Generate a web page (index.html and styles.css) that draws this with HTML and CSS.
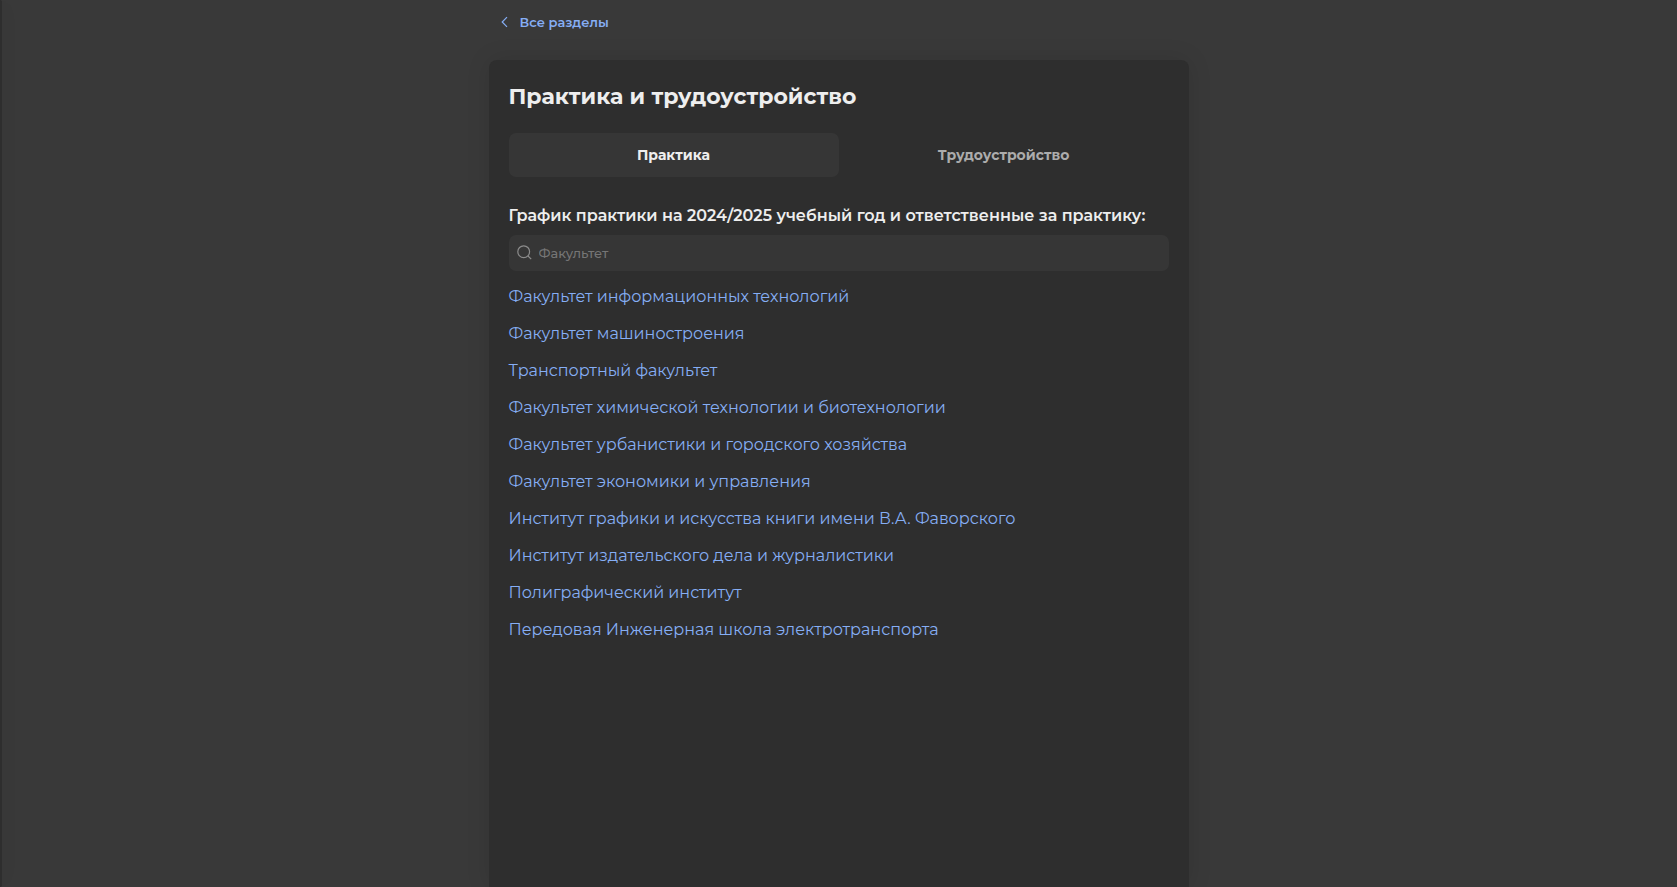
FILE: index.html
```html
<!DOCTYPE html>
<html lang="ru">
<head>
<meta charset="utf-8">
<meta name="viewport" content="width=device-width, initial-scale=1">
<title>Практика и трудоустройство</title>
<link rel="stylesheet" href="styles.css">
</head>
<body>
<aside class="drawer-edge" aria-hidden="true"></aside>
<div class="page">
  <nav class="back">
    <a class="back-link" href="#">
      <svg class="back-icon" viewBox="0 0 8 12" aria-hidden="true"><path d="M6 1.2 1.2 6 6 10.8"/></svg>
      Все разделы
    </a>
  </nav>
  <main class="card">
    <h1 class="title">Практика и трудоустройство</h1>
    <div class="tabs">
      <button class="tab tab-active" type="button">Практика</button>
      <button class="tab" type="button">Трудоустройство</button>
    </div>
    <section class="schedule">
      <h2 class="subtitle">График практики на 2024/2025 учебный год и ответственные за практику:</h2>
      <label class="search">
        <svg class="search-icon" viewBox="0 0 16 16" aria-hidden="true"><circle cx="6.7" cy="6.7" r="5.9"/><path d="m11 11 3.2 3.2"/></svg>
        <input class="search-input" type="text" placeholder="Факультет" aria-label="Факультет">
      </label>
      <ul class="faculties">
        <li><a href="#">Факультет информационных технологий</a></li>
        <li><a href="#">Факультет машиностроения</a></li>
        <li><a href="#">Транспортный факультет</a></li>
        <li><a href="#">Факультет химической технологии и биотехнологии</a></li>
        <li><a href="#">Факультет урбанистики и городского хозяйства</a></li>
        <li><a href="#">Факультет экономики и управления</a></li>
        <li><a href="#">Институт графики и искусства книги имени В.А. Фаворского</a></li>
        <li><a href="#">Институт издательского дела и журналистики</a></li>
        <li><a href="#">Полиграфический институт</a></li>
        <li><a href="#">Передовая Инженерная школа электротранспорта</a></li>
      </ul>
    </section>
  </main>
</div>
</body>
</html>
```
FILE: styles.css
```css
* { box-sizing: border-box; }

body {
  margin: 0;
  background: #393939;
  color: #eeeeee;
  font-family: Montserrat, Inter, "Open Sans", sans-serif;
  font-size: 16px;
}

a { color: #86aef5; text-decoration: none; }

/* Visible edge of the collapsed side drawer */
.drawer-edge {
  position: fixed;
  top: 0;
  bottom: 0;
  left: 0;
  width: 2px;
  background: #2e2e2e;
  border-radius: 0 8px 8px 0;
  box-shadow: 0 0 24px rgba(0, 0, 0, 0.1);
}

.page {
  display: flex;
  flex-direction: column;
  min-height: 100vh;
  width: 100%;
  max-width: 700px;
  margin: 0 auto;
}

.back { padding: 12px 12px 28px; }

.back-link {
  display: inline-flex;
  align-items: center;
  gap: 11px;
  font-size: 13px;
  line-height: 20px;
  font-weight: 600;
}

.back-icon {
  width: 8px;
  height: 12px;
  fill: none;
  stroke: currentColor;
  stroke-width: 1.2;
}

.card {
  flex: 1;
  padding: 20px;
  background: #2e2e2e;
  border-radius: 8px 8px 0 0;
  box-shadow: 0 0 24px rgba(0, 0, 0, 0.1);
}

.title {
  margin: 0 0 20px;
  font-size: 22px;
  line-height: 33px;
  font-weight: 700;
}

.tabs { display: flex; }

.tab {
  flex: 1;
  height: 44px;
  padding: 0;
  border: 0;
  border-radius: 7px;
  background: transparent;
  color: #acacac;
  font-family: inherit;
  font-size: 14px;
  font-weight: 700;
}

.tab-active { background: #363636; color: #eeeeee; }

.schedule { padding-top: 27px; }

.subtitle {
  margin: 0 0 7px;
  font-size: 16px;
  line-height: 24px;
  font-weight: 600;
}

.search {
  display: flex;
  align-items: center;
  gap: 6px;
  height: 36px;
  padding: 0 8px;
  background: #363636;
  border-radius: 7px;
}

.search-icon {
  width: 16px;
  height: 16px;
  fill: none;
  stroke: #8c8c8c;
  stroke-width: 1.2;
}

.search-input {
  flex: 1;
  min-width: 0;
  padding: 0;
  border: 0;
  outline: 0;
  background: transparent;
  color: inherit;
  font-family: inherit;
  font-size: 13px;
  font-weight: 500;
}

.search-input::placeholder { color: #757575; }

.faculties {
  margin: 0;
  padding: 7px 0 0;
  list-style: none;
  line-height: 37px;
}
```
